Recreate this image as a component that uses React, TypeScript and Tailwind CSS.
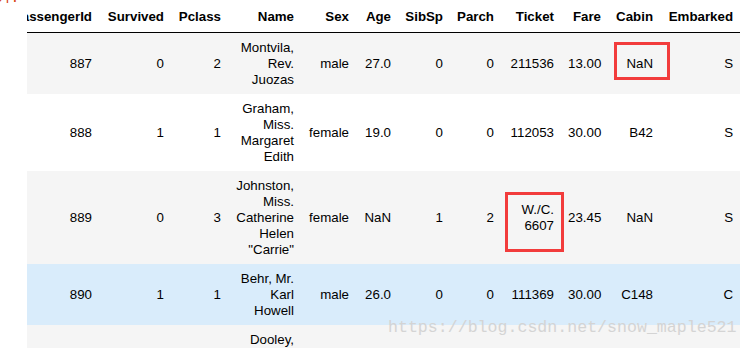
import React from 'react';

type Row = {
  id: number;
  survived: number;
  pclass: number;
  name: string[];
  sex: string;
  age: string;
  sibsp: number;
  parch: number;
  ticket: string[];
  fare: string;
  cabin: string;
  embarked: string;
  bg: string;
};

const rows: Row[] = [
  { id: 887, survived: 0, pclass: 2, name: ['Montvila,', 'Rev.', 'Juozas'], sex: 'male', age: '27.0', sibsp: 0, parch: 0, ticket: ['211536'], fare: '13.00', cabin: 'NaN', embarked: 'S', bg: 'bg-[#f5f5f5]' },
  { id: 888, survived: 1, pclass: 1, name: ['Graham,', 'Miss.', 'Margaret', 'Edith'], sex: 'female', age: '19.0', sibsp: 0, parch: 0, ticket: ['112053'], fare: '30.00', cabin: 'B42', embarked: 'S', bg: 'bg-white' },
  { id: 889, survived: 0, pclass: 3, name: ['Johnston,', 'Miss.', 'Catherine', 'Helen', '"Carrie"'], sex: 'female', age: 'NaN', sibsp: 1, parch: 2, ticket: ['W./C.', '6607'], fare: '23.45', cabin: 'NaN', embarked: 'S', bg: 'bg-[#f5f5f5]' },
  { id: 890, survived: 1, pclass: 1, name: ['Behr, Mr.', 'Karl', 'Howell'], sex: 'male', age: '26.0', sibsp: 0, parch: 0, ticket: ['111369'], fare: '30.00', cabin: 'C148', embarked: 'C', bg: 'bg-[#d9ecfb]' },
  { id: 891, survived: 0, pclass: 3, name: ['Dooley,', 'Mr.', 'Patrick'], sex: 'male', age: '32.0', sibsp: 0, parch: 0, ticket: ['370376'], fare: '7.75', cabin: 'NaN', embarked: 'Q', bg: 'bg-[#f5f5f5]' },
];

const headers = ['PassengerId', 'Survived', 'Pclass', 'Name', 'Sex', 'Age', 'SibSp', 'Parch', 'Ticket', 'Fare', 'Cabin', 'Embarked'];
const widths = ['w-[100px]', 'w-[72px]', 'w-[57px]', 'w-[73px]', 'w-[55px]', 'w-[42px]', 'w-[52px]', 'w-[51px]', 'w-[60px]', 'w-[47px]', 'w-[52px]', 'w-[80px]'];

const Lines = ({ lines }: { lines: string[] }) => (
  <>
    {lines.map((l, i) => (
      <div key={i}>{l}</div>
    ))}
  </>
);

const td = 'px-[7px] pt-[7px] pb-[6px] text-right align-middle whitespace-nowrap';

export default function App() {
  return (
    <div className="relative h-[348px] w-[749px] overflow-hidden bg-white text-black font-['Liberation_Sans',Arial,sans-serif] text-[13.3px] leading-[16px]">
      <div className="flex">
        {/* output prompt */}
        <div className="w-[27px] shrink-0">
          <div className="h-[3px] overflow-hidden">
            <div className="-mt-[10px] -ml-[6px] font-['Liberation_Mono',monospace] text-[14px] leading-[16px] text-[#d84315]">8]:</div>
          </div>
        </div>

        {/* dataframe */}
        <div className="w-[713px] overflow-hidden">
          <table className="-ml-[28px] w-[741px] table-fixed border-collapse">
            <colgroup>
              {widths.map((w, i) => (
                <col key={i} className={w} />
              ))}
            </colgroup>
            <thead className="border-b border-black">
              <tr>
                {headers.map((h) => (
                  <th key={h} className="px-[7px] pt-[9px] pb-[7px] text-right font-bold whitespace-nowrap">
                    {h}
                  </th>
                ))}
              </tr>
            </thead>
            <tbody>
              {rows.map((r) => (
                <tr key={r.id} className={r.bg}>
                  <td className={td}>{r.id}</td>
                  <td className={td}>{r.survived}</td>
                  <td className={td}>{r.pclass}</td>
                  <td className={td}><Lines lines={r.name} /></td>
                  <td className={td}>{r.sex}</td>
                  <td className={td}>{r.age}</td>
                  <td className={td}>{r.sibsp}</td>
                  <td className={td}>{r.parch}</td>
                  <td className={td}><Lines lines={r.ticket} /></td>
                  <td className={td}>{r.fare}</td>
                  <td className={td}>{r.cabin}</td>
                  <td className={td}>{r.embarked}</td>
                </tr>
              ))}
            </tbody>
          </table>
        </div>
      </div>

      {/* red annotation boxes */}
      <div className="absolute left-[614px] top-[42px] h-[38px] w-[56px] border-[3px] border-[#f23c3c]" />
      <div className="absolute left-[505px] top-[192px] h-[60px] w-[59px] border-[3px] border-[#f23c3c]" />

      {/* watermark */}
      <div className="absolute left-[388px] top-[318px] font-['Liberation_Mono',monospace] text-[16.6px] leading-[20px] text-[#d4d4d4]">
        https://blog.csdn.net/snow_maple521
      </div>
    </div>
  );
}
